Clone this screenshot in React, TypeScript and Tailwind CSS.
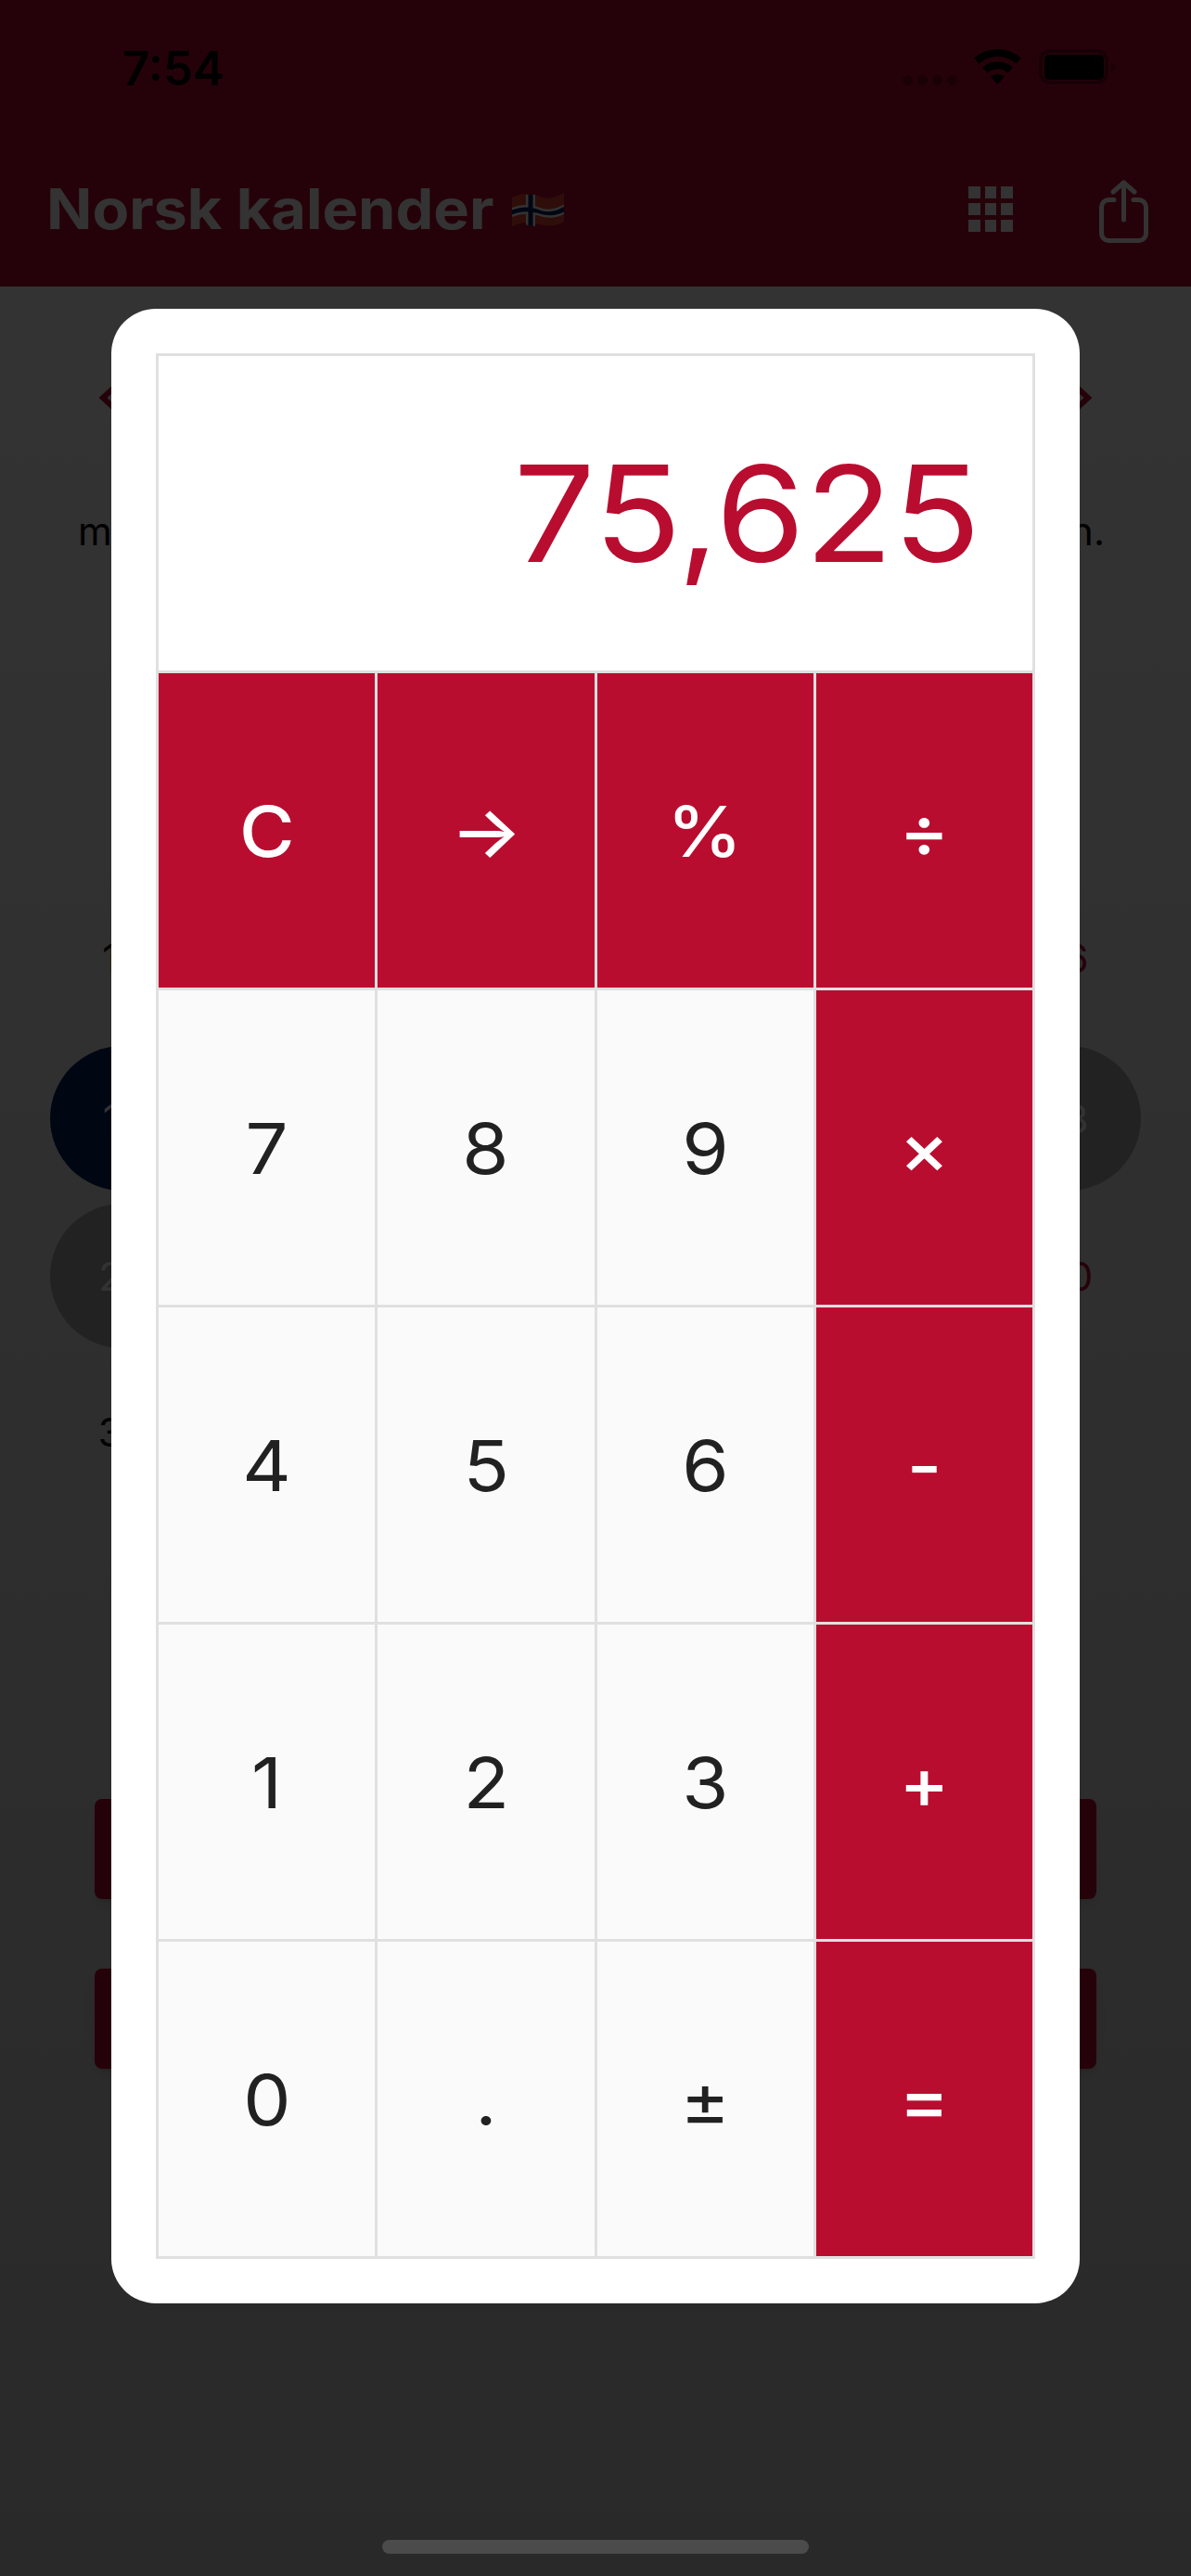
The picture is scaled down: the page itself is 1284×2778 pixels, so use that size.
import React from 'react';

const keys = [
  { label: 'C', accent: true },
  { label: '→', accent: true },
  { label: '%', accent: true },
  { label: '÷', accent: true },
  { label: '7' },
  { label: '8' },
  { label: '9' },
  { label: '×', accent: true },
  { label: '4' },
  { label: '5' },
  { label: '6' },
  { label: '-', accent: true },
  { label: '1' },
  { label: '2' },
  { label: '3' },
  { label: '+', accent: true },
  { label: '0' },
  { label: '.' },
  { label: '±' },
  { label: '=', accent: true },
];

function Flag() {
  return (
    <svg width="56" height="41" viewBox="0 0 56 41" className="ml-[55px] mt-[11px]">
      <path d="M0 7C12 1 22 3 30 6S46 8 56 2V33C46 39 38 38 30 36S12 32 0 38Z" fill="#e8452f" />
      <path d="M0 18C12 13 22 15 30 18S46 20 56 14.5V25C46 30 38 29 30 27S12 23 0 28Z" fill="#ffffff" />
      <path d="M15 4H25V38L15 36.5Z" fill="#ffffff" />
      <path d="M0 20.5C12 15.5 22 17.5 30 20.5S46 22.5 56 17V22.5C46 27.5 38 26.5 30 24.5S12 20.5 0 25.5Z" fill="#00205b" />
      <path d="M17.5 3.5H22.5V38L17.5 37Z" fill="#00205b" />
    </svg>
  );
}

function StatusIcons() {
  return (
    <div className="flex items-start">
      <div className="flex gap-[5px] mt-[28px]">
        <div className="w-[11px] h-[11px] rounded-full bg-black/30" />
        <div className="w-[11px] h-[11px] rounded-full bg-black/30" />
        <div className="w-[11px] h-[11px] rounded-full bg-black/30" />
        <div className="w-[11px] h-[11px] rounded-full bg-black/30" />
      </div>
      <svg width="51" height="38" viewBox="0 0 51 38" className="ml-[18px]">
        <path d="M2.75 12.73A34 34 0 0 1 48.25 12.73" fill="none" stroke="#000" strokeWidth="8" />
        <path d="M11.8 22.8A20.5 20.5 0 0 1 39.2 22.8" fill="none" stroke="#000" strokeWidth="8" />
        <path d="M25.5 38L18.1 29.8A11 11 0 0 1 32.9 29.8Z" fill="#000" />
      </svg>
      <svg width="82" height="38" viewBox="0 0 82 38" className="ml-[19px]">
        <rect x="2" y="2" width="71" height="34" rx="10" fill="none" stroke="#000" strokeOpacity="0.35" strokeWidth="4" />
        <rect x="6" y="6" width="64" height="27" rx="5" fill="#000" />
        <path d="M78 14C81 15 82 17 82 19S81 23 78 24Z" fill="#000" fillOpacity="0.4" />
      </svg>
    </div>
  );
}

function GridIcon() {
  return (
    <div className="grid grid-cols-3 gap-[5px] w-[48px] mt-[6px]">
      {Array.from({ length: 9 }).map((_, i) => (
        <div key={i} className="h-[13px] bg-white" />
      ))}
    </div>
  );
}

function ShareIcon() {
  return (
    <svg width="53" height="68" viewBox="0 0 53 68" fill="none" stroke="#fff" strokeWidth="5" strokeLinecap="round" className="ml-[93px] -mt-[1px]">
      <path d="M16 21.5H10.5a8 8 0 0 0-8 8v28a8 8 0 0 0 8 8h32a8 8 0 0 0 8-8v-28a8 8 0 0 0-8-8H37" />
      <path d="M26.5 3V43" />
      <path d="M15 13L26.5 3L38 13" strokeLinejoin="round" />
    </svg>
  );
}

function Background() {
  return (
    <div className="w-[1284px] h-[2778px] flex flex-col">
      <header className="h-[309px] bg-[#ba0c2f] shrink-0">
        <div className="h-[195px] flex items-start justify-between pl-[132px] pr-[82px]">
          <span className="text-[51px] leading-none font-semibold text-black mt-[48px]">7:54</span>
          <div className="mt-[53px]">
            <StatusIcons />
          </div>
        </div>
        <div className="flex items-start justify-between pl-[50px] pr-[46px]">
          <div className="flex items-start">
            <span className="inline-block origin-left scale-x-[1.08] text-[60px] leading-none font-bold text-white">Norsk kalender</span>
            <Flag />
          </div>
          <div className="flex items-start">
            <GridIcon />
            <ShareIcon />
          </div>
        </div>
      </header>

      <main className="flex-1 bg-linear-to-b from-[#ffffff] to-[#cdcdcd]">
        <div className="flex justify-between px-[106px] pt-[105px]">
          <svg width="26" height="30" viewBox="0 0 26 30" fill="none" stroke="#ba0c2f" strokeWidth="6">
            <path d="M18 3L5 15L18 27" />
          </svg>
          <svg width="26" height="30" viewBox="0 0 26 30" fill="none" stroke="#ba0c2f" strokeWidth="6">
            <path d="M8 3L21 15L8 27" />
          </svg>
        </div>

        <div className="flex justify-between pl-[84px] pr-[93px] mt-[108px] text-[42px] leading-none text-black">
          <span>m</span>
          <span>n.</span>
        </div>

        <div className="flex justify-between px-[54px] mt-[419px] text-[42px] leading-none text-center">
          <span className="w-[156px] text-black">10</span>
          <span className="w-[156px] text-[#ba0c2f]">16</span>
        </div>

        <div className="flex justify-between px-[54px] mt-[73px] text-[42px]">
          <div className="w-[156px] h-[156px] rounded-full bg-[#00205b] text-white flex items-center justify-center">12</div>
          <div className="w-[156px] h-[156px] rounded-full bg-[#a8a8a8] text-white flex items-center justify-center">18</div>
        </div>

        <div className="flex justify-between px-[54px] mt-[14px] text-[42px]">
          <div className="w-[156px] h-[156px] rounded-full bg-[#a8a8a8] text-white flex items-center justify-center">23</div>
          <div className="w-[156px] h-[156px] flex items-center justify-center text-[#ba0c2f]">30</div>
        </div>

        <div className="flex justify-between px-[54px] mt-[70px] text-[42px] leading-none text-center">
          <span className="w-[156px] text-black">30</span>
          <span className="w-[156px]" />
        </div>

        <div className="mx-[102px] mt-[374px] h-[108px] rounded-lg bg-[#ba0c2f] shadow-lg" />
        <div className="mx-[102px] mt-[75px] h-[108px] rounded-lg bg-[#ba0c2f] shadow-lg" />
      </main>
    </div>
  );
}

export default function App() {
  return (
    <div className="relative w-[1284px] h-[2778px] overflow-hidden font-['Inter',sans-serif]">
      <Background />

      <div className="absolute inset-0 bg-black/80 pt-[333px] px-[120px]">
        <div className="h-[2151px] rounded-[48px] bg-white p-[48px]">
          <div className="h-full grid grid-cols-4 grid-rows-6 gap-[3px] border-[3px] border-[#e0e0e0] bg-[#e0e0e0]">
            <div className="col-span-4 bg-white flex items-center justify-end pr-[56px] text-[144px] text-[#b90d30]">
              <span className="inline-block origin-right scale-x-[1.08]">75,625</span>
            </div>
            {keys.map((key) => (
              <button
                key={key.label}
                className={
                  key.accent
                    ? 'flex items-center justify-center bg-[#b90d30] text-white text-[76px] font-medium'
                    : 'flex items-center justify-center bg-[#fafafa] text-[#212121] text-[76px]'
                }
              >
                <span className="inline-block scale-x-[1.07]">{key.label}</span>
              </button>
            ))}
          </div>
        </div>
      </div>

      <div className="absolute left-[412px] top-[2739px] w-[460px] h-[15px] rounded-full bg-[#4b4b4b]" />
    </div>
  );
}
